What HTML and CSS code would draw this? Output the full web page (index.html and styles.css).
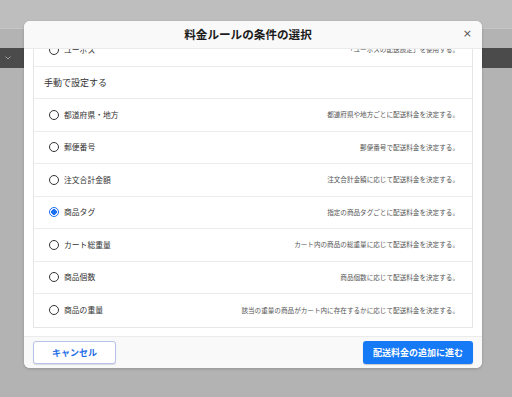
FILE: index.html
```html
<!DOCTYPE html>
<html lang="ja">
<head>
<meta charset="utf-8">
<link rel="stylesheet" href="styles.css">
</head>
<body>
<div class="page">
  <div class="topstrip"></div>
  <div class="toolbar"><span class="chev"><svg width="6" height="4" viewBox="0 0 6 4"><path d="M0.5 0.5 L3 3 L5.5 0.5" fill="none" stroke="#aaa" stroke-width="0.9"/></svg></span></div>
</div>

<div class="modal">
  <div class="modal-header">
    <h1 class="title">料金ルールの条件の選択</h1>
    <span class="close">×</span>
  </div>
  <div class="modal-body">
    <div class="list">
      <div class="row"><span class="left"><span class="radio"></span><span class="label">ユーボス</span></span><span class="desc">「ユーボスの配送設定」を使用する。</span></div>
      <div class="row section">手動で設定する</div>
      <div class="row"><span class="left"><span class="radio"></span><span class="label">都道府県・地方</span></span><span class="desc">都道府県や地方ごとに配送料金を決定する。</span></div>
      <div class="row"><span class="left"><span class="radio"></span><span class="label">郵便番号</span></span><span class="desc">郵便番号で配送料金を決定する。</span></div>
      <div class="row"><span class="left"><span class="radio"></span><span class="label">注文合計金額</span></span><span class="desc">注文合計金額に応じて配送料金を決定する。</span></div>
      <div class="row"><span class="left"><span class="radio checked"></span><span class="label">商品タグ</span></span><span class="desc">指定の商品タグごとに配送料金を決定する。</span></div>
      <div class="row"><span class="left"><span class="radio"></span><span class="label">カート総重量</span></span><span class="desc">カート内の商品の総重量に応じて配送料金を決定する。</span></div>
      <div class="row"><span class="left"><span class="radio"></span><span class="label">商品個数</span></span><span class="desc">商品個数に応じて配送料金を決定する。</span></div>
      <div class="row"><span class="left"><span class="radio"></span><span class="label">商品の重量</span></span><span class="desc">該当の重量の商品がカート内に存在するかに応じて配送料金を決定する。</span></div>
    </div>
  </div>
  <div class="modal-footer">
    <button class="btn btn-secondary">キャンセル</button>
    <button class="btn btn-primary">配送料金の追加に進む</button>
  </div>
</div>
</body>
</html>
```
FILE: styles.css
```css
* { box-sizing: border-box; }
html, body {
  margin: 0;
  padding: 0;
  background: #b3b3b3;
  font-family: "Noto Sans CJK JP", "Noto Sans", sans-serif;
}
.page {
  width: 512px;
  height: 397px;
  overflow: hidden;
}
.topstrip {
  height: 29px;
  background: #bebebe;
  border-bottom: 1px solid #c6c6c6;
}
.toolbar {
  margin-top: 19px;
  height: 20px;
  background: #4b4b4b;
  display: flex;
  align-items: center;
  padding-left: 5px;
}
.chev { display: flex; }

.modal {
  position: absolute;
  left: 24px;
  top: 21px;
  width: 458px;
  background: #fff;
  border-radius: 6px;
  overflow: hidden;
  box-shadow: 0 1px 3px rgba(0,0,0,0.18);
}
.modal-header {
  height: 28px;
  background: #f9f9f9;
  border-bottom: 1px solid #ebebeb;
  display: flex;
  align-items: center;
  justify-content: center;
  position: relative;
}
.title {
  margin: 0;
  font-size: 11.6px;
  font-weight: 700;
  color: #1c1c1c;
  line-height: 1;
  margin-right: 10px;
}
.close {
  position: absolute;
  right: 10px;
  top: 7px;
  font-size: 11px;
  line-height: 1;
  color: #555;
  font-family: "DejaVu Sans", sans-serif;
}
.modal-body {
  height: 287px;
  padding: 0 9px 9px;
  overflow: hidden;
}
.list {
  margin-top: -16px;
  border: 1px solid #e6e6e6;
}
.row {
  height: 32.5px;
  border-bottom: 1px solid #ececec;
  display: flex;
  align-items: center;
  justify-content: space-between;
  padding: 0 13px 0 15px;
}
.row:last-child { border-bottom: none; }
.row.section {
  padding-left: 10px;
  font-size: 9px;
  color: #333;
}
.left {
  display: flex;
  align-items: center;
  gap: 5px;
}
.radio {
  width: 10px;
  height: 10px;
  border: 1.2px solid #333;
  border-radius: 50%;
  background: #fff;
}
.radio.checked {
  border: 1.2px solid #1b6ff0;
  background: radial-gradient(circle, #1b6ff0 0 2.6px, #fff 3px);
}
.label {
  font-size: 7.8px;
  color: #333;
  line-height: 1;
}
.desc {
  font-size: 6.6px;
  color: #555;
  line-height: 1;
}
.modal-footer {
  height: 32px;
  background: #f9f9f9;
  border-top: 1px solid #ebebeb;
  display: flex;
  align-items: center;
  justify-content: space-between;
  padding: 0 9px;
}
.btn {
  height: 23px;
  border-radius: 3px;
  font-family: "Noto Sans CJK JP", sans-serif;
  font-weight: 700;
  font-size: 9px;
  line-height: 1;
  padding: 0;
}
.btn-secondary {
  width: 83px;
  background: #fff;
  border: 1px solid #b8c2ea;
  color: #1f6fe6;
  box-shadow: 0 1px 1px rgba(0,0,0,0.12);
}
.btn-primary {
  width: 110px;
  background: #1679f5;
  border: none;
  color: #fff;
  box-shadow: 0 1px 1px rgba(0,0,0,0.2);
}
```
